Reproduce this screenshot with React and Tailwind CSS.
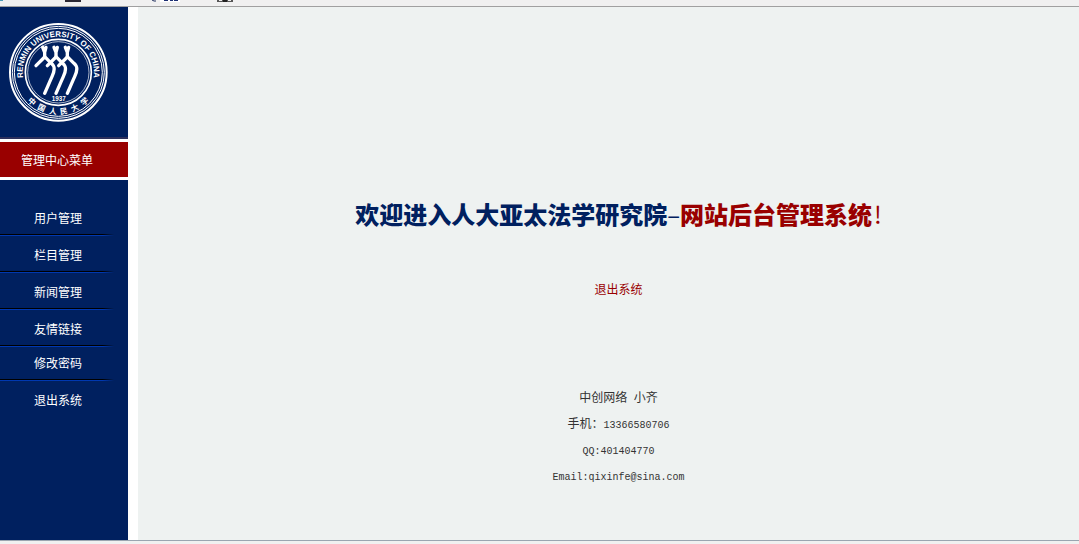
import React from 'react';

const menu = [
  { label: '用户管理', row: 'pt-[11px]', line: true },
  { label: '栏目管理', row: 'pt-[11px]', line: true },
  { label: '新闻管理', row: 'pt-[11px]', line: true },
  { label: '友情链接', row: 'pt-[11px]', line: true },
  { label: '修改密码', row: 'pt-[8px]', line: true },
  { label: '退出系统', row: 'pt-[11px]', line: false },
];

const sealCharacters = [
  { char: '中', angle: 42 },
  { char: '国', angle: 25 },
  { char: '人', angle: 8 },
  { char: '民', angle: -8 },
  { char: '大', angle: -25 },
  { char: '学', angle: -42 },
];

function Figure({ x }) {
  return (
    <g transform={`translate(${x} 0)`}>
      <path d="M-6 100L0 115L4 100M0 112V129L-26 155" />
      <path d="M0 128L20 148C32 158 30 170 22 188C13 208 8 220 0 238" />
    </g>
  );
}

function Emblem() {
  return (
    <svg viewBox="24 24 303 303" className="size-[101px]" role="img" aria-label="Renmin University of China">
      <defs>
        <path id="arc-rise" d="M175 282A107 107 0 0 1 175 68A107 107 0 0 1 175 282" />
      </defs>
      <g fill="none" stroke="#fff">
        <circle cx="175" cy="175" r="145" strokeWidth="6" />
        <circle cx="175" cy="175" r="138" strokeWidth="3" />
        <circle cx="175" cy="175" r="132" strokeWidth="3" />
        <circle cx="175" cy="175" r="99" strokeWidth="5" />
        <circle cx="175" cy="175" r="92" strokeWidth="2" />
        <g strokeWidth="10" strokeLinejoin="round" strokeLinecap="round">
          <Figure x={134} />
          <Figure x={168} />
          <Figure x={202} />
        </g>
      </g>
      <g fill="#fff" className="font-['Liberation_Sans'] font-bold">
        <text fontSize="24" textAnchor="middle">
          <textPath href="#arc-rise" startOffset="50%">RENMIN UNIVERSITY OF CHINA</textPath>
        </text>
        <text x="176" y="260" fontSize="19" textAnchor="middle">1937</text>
      </g>
      <g fill="#fff" fontSize="23" textAnchor="middle" className="font-['Noto_Sans_CJK_SC',sans-serif] font-bold">
        {sealCharacters.map(({ char, angle }) => (
          <text key={char} x="175" y="301" transform={`rotate(${angle} 175 175)`}>{char}</text>
        ))}
      </g>
    </svg>
  );
}

export default function App() {
  return (
    <div className="flex h-screen flex-col bg-[#f0f0f0] font-['Liberation_Sans','Noto_Sans_CJK_SC',sans-serif] text-[12px] leading-[18px]">
      <div className="h-[7px] border-b border-[#a0a0a0]">
        <svg width="250" height="6" aria-hidden="true">
          <path d="M0 0H3V1H0z" fill="#4c9ab5" />
          <path d="M65 0H81V2H65z" fill="#2b2833" />
          <path d="M152 0L154 1H156" stroke="#20305f" fill="none" />
          <path d="M160 0H180V2H160z" fill="#fff" />
          <path d="M164 0H168V1H164zM170 0H173V1H170zM174 0H178V1H174z" fill="#1c2f73" />
          <path d="M217 0H233V2H217z" fill="#555" />
          <path d="M219 0H222V1H219zM228 0H231V1H228z" fill="#eee" />
          <path d="M223 0H227V2H223z" fill="#222" />
        </svg>
      </div>
      <div className="flex flex-1">
        <aside className="w-[128px] bg-[#00205f] text-white">
          <div className="h-[132px] border-b-2 border-[#2b2f5c] pt-[15px] pl-[8px]">
            <Emblem />
          </div>
          <h2 className="border-y-[3px] border-white bg-[#990000] pt-[10px] pr-[14px] pb-[7px] text-center">管理中心菜单</h2>
          <nav className="pt-[19px]">
            <ul>
              {menu.map((item) => (
                <li key={item.label}>
                  <a href="#" className={`block pr-[12px] pb-[6px] text-center ${item.row}`}>{item.label}</a>
                  {item.line && (
                    <div className="mr-[14px]">
                      <div className="h-px bg-linear-to-r from-black from-90% to-transparent" />
                      <div className="h-px bg-linear-to-r from-[#0038b0] from-90% to-transparent" />
                    </div>
                  )}
                </li>
              ))}
            </ul>
          </nav>
        </aside>
        <main className="flex-1 border-l-[10px] border-white bg-[#eef2f1] pt-[189px] pl-[20px] text-center text-[#333]">
          <h1 className="font-['Noto_Sans_CJK_SC',sans-serif] text-[24px] leading-[36px] font-black text-[#00205f]">
            欢迎进入人大亚太法学研究院<span className="font-normal">–</span>
            <span className="text-[#990000]">网站后台管理系统<span className="ml-[2px] font-normal">!</span></span>
          </h1>
          <a href="#" className="mt-[49px] inline-block text-[#990000]">退出系统</a>
          <address className="mt-[86px] leading-[26px] not-italic">
            <p>中创网络 <span className="ml-[3px]">小齐</span></p>
            <p>手机：<span className="font-['Liberation_Mono'] text-[10px]">13366580706</span></p>
            <p className="font-['Liberation_Mono'] text-[10px]">QQ:401404770</p>
            <p className="font-['Liberation_Mono'] text-[10px]">Email:qixinfe@sina.com</p>
          </address>
        </main>
      </div>
      <footer className="h-[4px] border-t border-[#9aa5b0]" />
    </div>
  );
}
